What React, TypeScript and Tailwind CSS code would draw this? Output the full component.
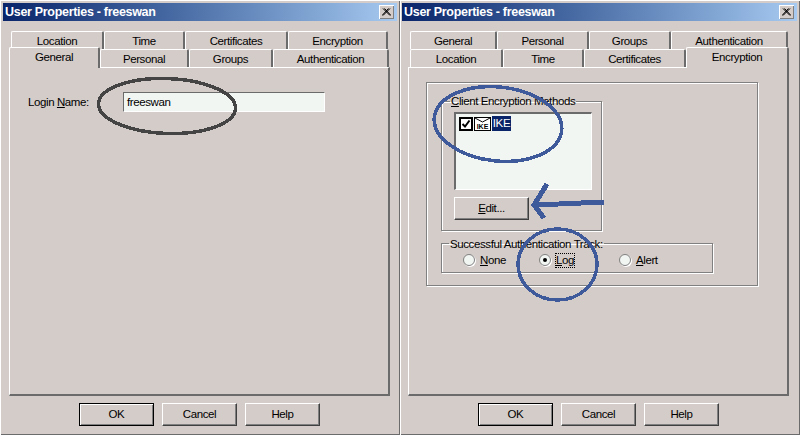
import React from "react";

type TabDef = { label: string; cls: string; active?: boolean };

const bevel = "shadow-[inset_1px_1px_0_#ffffff,inset_-1px_-1px_0_#808080]";

const Tab = ({ label, cls, active }: TabDef) => (
	<div
		className={`${cls} flex justify-center rounded-t-[2px] bg-[#d4ccc8] border-t border-l border-white border-r-2 border-r-[#6b6b6b] ${
			active ? "relative z-10 h-[21px] -mb-[1px] pt-[3px] border-b-0" : "h-[18px] pt-[3px]"
		}`}
	>
		{label}
	</div>
);

const Button = ({ label, isDefault, cls }: { label: React.ReactNode; isDefault?: boolean; cls: string }) => (
	<div
		className={`${cls} flex items-center justify-center h-[23px] bg-[#d4ccc8] ${
			isDefault
				? "border border-black shadow-[inset_1px_1px_0_#ffffff,inset_-1px_-1px_0_#808080]"
				: "border-t border-l border-white border-r border-b border-r-[#404040] border-b-[#404040] shadow-[inset_-1px_-1px_0_#808080]"
		}`}
	>
		{label}
	</div>
);

const Radio = ({ label, checked, cls }: { label: React.ReactNode; checked?: boolean; cls: string }) => (
	<div className={`${cls} flex items-center`}>
		<span className="flex items-center justify-center w-[12px] h-[12px] rounded-full bg-[#f2f6f3] border border-[#808080] shadow-[1px_1px_0_#ffffff]">
			{checked && <span className="w-[4px] h-[4px] rounded-full bg-black" />}
		</span>
		{label}
	</div>
);

const Window = ({
	pad,
	row1,
	row2,
	children,
}: {
	pad: string;
	row1: TabDef[];
	row2: TabDef[];
	children: React.ReactNode;
}) => (
	<div className={`${pad} w-[400px] h-[435px] pt-[3px] pr-[3px] flex flex-col bg-[#d4ccc8] shadow-[inset_1px_1px_0_#ffffff,inset_-1px_-1px_0_#6b6b6b]`}>
		<div className="h-[18px] shrink-0 flex items-center justify-between pl-[2px] pr-[3px] bg-gradient-to-r from-[#0a246a] to-[#a6caf0]">
			<span className="text-white font-bold text-[12.5px] tracking-[-0.3px] leading-none">User Properties - freeswan</span>
			<span className={`${bevel} flex items-center justify-center w-[15px] h-[14px] bg-[#d4ccc8]`}>
				<svg width="9" height="8" viewBox="0 0 9 8">
					<path d="M1 0.5L8 7.5M2.5 0.5L9 7.5M8 0.5L1 7.5M6.5 0.5L0 7.5" stroke="#000" strokeWidth="1" fill="none" />
				</svg>
			</span>
		</div>
		<div className="mt-[10px] ml-[6px] w-[381px] flex flex-col">
			<div className="flex h-[18px]">
				{row1.map((t) => (
					<Tab key={t.label} {...t} />
				))}
			</div>
			<div className="flex items-end h-[18px]">
				{row2.map((t) => (
					<Tab key={t.label} {...t} />
				))}
			</div>
			<div className="h-[329px] border-t border-l border-white border-r-2 border-b-2 border-r-[#6b6b6b] border-b-[#6b6b6b]">
				{children}
			</div>
		</div>
		<div className="mt-[7px] ml-[76px] flex gap-[8px]">
			<Button label="OK" isDefault cls="w-[75px]" />
			<Button label="Cancel" cls="w-[75px]" />
			<Button label="Help" cls="w-[75px]" />
		</div>
	</div>
);

export default function App() {
	return (
		<div className="relative w-[800px] h-[435px] overflow-hidden flex text-[11.5px] tracking-[-0.4px] leading-[13px] text-black bg-[#d4ccc8] [font-family:'Liberation_Sans',Arial,sans-serif]">
			<Window
				pad="pl-[3px]"
				row1={[
					{ label: "Location", cls: "ml-[2px] w-[93px]" },
					{ label: "Time", cls: "w-[81px]" },
					{ label: "Certificates", cls: "w-[103px]" },
					{ label: "Encryption", cls: "w-[100px]" },
				]}
				row2={[
					{ label: "General", cls: "w-[91px]", active: true },
					{ label: "Personal", cls: "w-[89px]" },
					{ label: "Groups", cls: "w-[84px]" },
					{ label: "Authentication", cls: "w-[116px]" },
				]}
			>
				<div className="flex items-center pt-[24px] pl-[18px]">
					<span className="w-[95px]">
						Login <u>N</u>ame:
					</span>
					<div className="w-[202px] h-[20px] pl-[3px] flex items-center bg-[#f2f6f3] border-t border-l border-[#6b6b6b] border-r border-b border-r-white border-b-white">
						freeswan
					</div>
				</div>
			</Window>
			<Window
				pad="pl-[2px]"
				row1={[
					{ label: "General", cls: "ml-[2px] w-[87px]" },
					{ label: "Personal", cls: "w-[92px]" },
					{ label: "Groups", cls: "w-[82px]" },
					{ label: "Authentication", cls: "w-[117px]" },
				]}
				row2={[
					{ label: "Location", cls: "ml-[2px] w-[93px]" },
					{ label: "Time", cls: "w-[81px]" },
					{ label: "Certificates", cls: "w-[102px]" },
					{ label: "Encryption", cls: "w-[103px]", active: true },
				]}
			>
				<div className="ml-[17px] mt-[14px] w-[332px] h-[204px] border border-[#808080] shadow-[1px_1px_0_#ffffff,inset_1px_1px_0_#ffffff]">
					<fieldset className="ml-[14px] mt-[12px] w-[161px] h-[136px] border border-[#808080] shadow-[1px_1px_0_#ffffff,inset_1px_1px_0_#ffffff] pl-[12px]">
						<legend className="-ml-[4px] px-[1px]">
							<u>C</u>lient Encryption Methods
						</legend>
						<div className="mt-[4px] w-[138px] h-[78px] pt-[3px] pl-[3px] flex items-start bg-[#f2f6f3] border-t-2 border-l-2 border-[#6b6b6b] border-r border-b border-r-white border-b-white">
							<span className="w-[14px] h-[14px] flex items-center justify-center bg-white border-2 border-black">
								<svg width="10" height="10" viewBox="0 0 10 10">
									<path d="M1.5 5L4 7.5L8.5 1.5" stroke="#000" strokeWidth="2" fill="none" />
								</svg>
							</span>
							<span className="ml-[1px] relative w-[17px] h-[14px] bg-white border border-black flex items-end justify-center">
								<svg className="absolute left-0 top-0" width="15" height="6" viewBox="0 0 15 6">
									<path d="M0 0L7.5 4L15 0" stroke="#000" strokeWidth="1" fill="none" />
								</svg>
								<span className="text-[7px] leading-[7px] font-bold tracking-normal">IKE</span>
							</span>
							<span className="ml-[1px] -mt-[1px] w-[19px] h-[15px] flex items-center justify-center bg-[#0a246a] text-white">IKE</span>
						</div>
						<Button label={<span><u>E</u>dit...</span>} cls="mt-[7px] w-[75px]" />
					</fieldset>
					<fieldset className="ml-[14px] mt-[6px] w-[272px] h-[36px] border border-[#808080] shadow-[1px_1px_0_#ffffff,inset_1px_1px_0_#ffffff] flex">
						<legend className="ml-[7px] px-[1px]">
							<span className="relative top-[1px]">Successful Authentication Track:</span>
						</legend>
						<div className="flex items-center h-[20px] pl-[21px]">
							<Radio cls="w-[76px] gap-[5px]" label={<span><u>N</u>one</span>} />
							<Radio cls="w-[80px] gap-[5px]" checked label={<span className="outline-1 outline-dotted outline-black"><u>L</u>og</span>} />
							<Radio cls="gap-[5px]" label={<span><u>A</u>lert</span>} />
						</div>
					</fieldset>
				</div>
			</Window>
			<svg className="absolute inset-0 pointer-events-none" width="800" height="435" viewBox="0 0 800 435" fill="none" shapeRendering="crispEdges">
				<ellipse cx="167" cy="106" rx="68.5" ry="27.5" transform="rotate(2 167 106)" stroke="#444444" strokeWidth="3.5" />
				<ellipse cx="498" cy="124" rx="64" ry="37" transform="rotate(6 498 124)" stroke="#3f5a9b" strokeWidth="3.5" />
				<ellipse cx="557.5" cy="264.5" rx="39.5" ry="35.5" stroke="#3f5a9b" strokeWidth="3.5" />
				<path d="M604 202L536 205" stroke="#3f5a9b" strokeWidth="5" />
				<path d="M547 184L534 205L544 218" stroke="#3f5a9b" strokeWidth="5" />
			</svg>
		</div>
	);
}
